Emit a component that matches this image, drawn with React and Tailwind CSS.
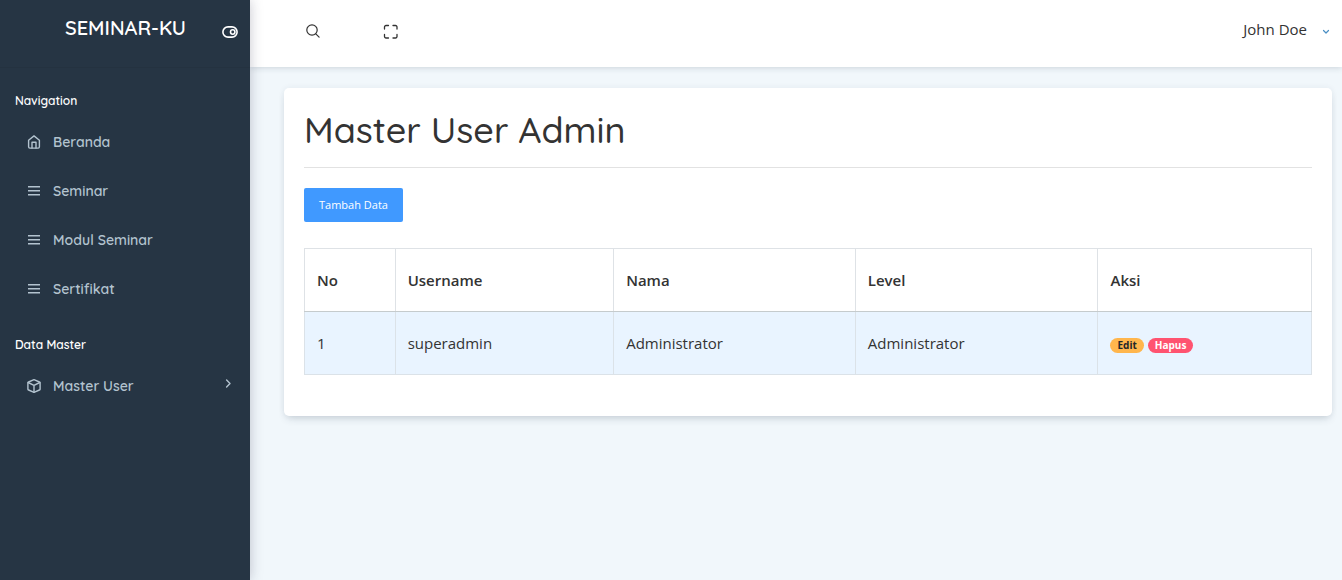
import React from "react";

const heading = "font-['Quicksand','Lato',sans-serif]";

function Icon({ children, className = "", ...rest }) {
  return (
    <svg
      viewBox="0 0 16 16"
      fill="none"
      stroke="currentColor"
      strokeWidth="1.4"
      strokeLinecap="round"
      strokeLinejoin="round"
      aria-hidden="true"
      className={"size-4 shrink-0 " + className}
      {...rest}
    >
      {children}
    </svg>
  );
}

const HomeIcon = () => (
  <Icon strokeWidth="1.4">
    <path d="M2.6 6.2 8 1.9l5.4 4.3v6.6a1.3 1.3 0 0 1-1.3 1.3H3.9a1.3 1.3 0 0 1-1.3-1.3z" />
    <path d="M6 14V8.2h4V14" />
  </Icon>
);

const ListIcon = () => (
  <Icon strokeLinecap="butt" strokeWidth="1.5">
    <path d="M2 3.8h12M2 7.8h12M2 11.8h12" />
  </Icon>
);

const BoxIcon = () => (
  <Icon strokeWidth="1.4">
    <path d="M8 1.6 13.4 4a1 1 0 0 1 .7.9v6.2a1 1 0 0 1-.7.9L8 14.4 2.6 12a1 1 0 0 1-.7-.9V4.9a1 1 0 0 1 .7-.9z" />
    <path d="M2.2 4.5 8 7.4l5.8-2.9M8 7.4v6.8" />
  </Icon>
);

function NavGroup({ title, items }) {
  return (
    <section>
      <h2 className={"px-[15px] py-2 text-[12px] leading-4 font-semibold text-white " + heading}>{title}</h2>
      <ul>
        {items.map(({ label, icon: I, more }) => (
          <li key={label}>
            <a href="#" className="flex h-[49px] items-center pr-[14px] pl-[26px] text-[#b3c3cf]">
              <I />
              <span className={"ml-[11px] grow text-[14px] leading-5 font-semibold " + heading}>{label}</span>
              {more && (
                <Icon className="mb-1">
                  <path d="m6.6 4 3.4 3.5-3.4 3.5" />
                </Icon>
              )}
            </a>
          </li>
        ))}
      </ul>
    </section>
  );
}

const columns = [
  ["No", "w-[9%]"],
  ["Username", "w-[21.7%]"],
  ["Nama", "w-[24%]"],
  ["Level", "w-[24.1%]"],
  ["Aksi", "w-[21.2%]"],
];

const users = [{ no: 1, username: "superadmin", nama: "Administrator", level: "Administrator" }];

export default function App() {
  return (
    <div className="flex min-h-screen bg-[#f1f7fb] font-['Open_Sans',sans-serif] text-[#333]">
      <aside className="z-10 w-[250px] shrink-0 bg-[#263544] shadow-[0_0_12px_rgba(40,40,70,0.26)]">
        <div className="flex h-[68px] items-start justify-end border-b border-[#243240] pr-3">
          <a href="#" className={"mt-3 mr-9 text-[20px] leading-8 font-semibold text-white " + heading}>
            SEMINAR-KU
          </a>
          <button type="button" aria-label="Toggle sidebar" className="mt-6 text-white">
            <Icon strokeWidth="1.6">
              <rect x=".9" y="2.9" width="14.2" height="10.2" rx="5.1" />
              <circle cx="10.7" cy="8" r="2.2" />
            </Icon>
          </button>
        </div>
        <nav className="flex flex-col gap-4 pt-[17px]">
          <NavGroup
            title="Navigation"
            items={[
              { label: "Beranda", icon: HomeIcon },
              { label: "Seminar", icon: ListIcon },
              { label: "Modul Seminar", icon: ListIcon },
              { label: "Sertifikat", icon: ListIcon },
            ]}
          />
          <NavGroup title="Data Master" items={[{ label: "Master User", icon: BoxIcon, more: true }]} />
        </nav>
      </aside>

      <div className="min-w-0 grow">
        <header className="flex h-[67px] items-start bg-white pr-2 pl-[55px] shadow-[0_1px_6px_rgba(40,60,80,0.18)]">
          <button type="button" aria-label="Search" className="mt-[23px]">
            <Icon strokeWidth="1.2">
              <circle cx="7" cy="7" r="5.2" />
              <path d="m10.8 10.8 3.3 3.3" />
            </Icon>
          </button>
          <button type="button" aria-label="Full screen" className="mt-6 ml-[62px]">
            <Icon strokeWidth="1.3">
              <path d="M1.5 5V3A1.5 1.5 0 0 1 3 1.5h2.5M10 1.5h2.5A1.5 1.5 0 0 1 14 3v2M14 10.5v2a1.5 1.5 0 0 1-1.5 1.5H10M5.5 14H3a1.5 1.5 0 0 1-1.5-1.5v-2" />
            </Icon>
          </button>
          <button
            type="button"
            className="mt-[17px] ml-auto flex items-center gap-[11px] text-[15px] leading-6"
          >
            <span>John Doe</span>
            <Icon className="mt-[5px] text-[#4a8fc4]" strokeWidth="1.2">
              <path d="m5.5 6.5 2.5 2.5 2.5-2.5" />
            </Icon>
          </button>
        </header>

        <main className="pt-[21px] pr-[10px] pb-8 pl-[34px]">
          <section className="rounded-[5px] bg-white px-5 pt-5 pb-[41px] shadow-[0_5px_8px_-3px_rgba(40,60,80,0.2),0_0_6px_rgba(40,60,80,0.07)]">
            <h1 className={"border-b border-[#e2e2e2] pb-[15px] text-[36px] leading-11 font-medium " + heading}>
              Master User Admin
            </h1>
            <button
              type="button"
              className="mt-5 h-[34px] rounded-[2px] bg-[#4099ff] px-[15px] text-[11px] leading-4 text-white"
            >
              Tambah Data
            </button>
            <table className="mt-[26px] w-full table-fixed border-collapse text-left text-[15px] leading-6">
              <thead>
                <tr className="h-[63px]">
                  {columns.map(([name, width]) => (
                    <th key={name} className={"border border-[#dee2e6] border-b-[#c5cbcd] px-3 font-semibold " + width}>
                      {name}
                    </th>
                  ))}
                </tr>
              </thead>
              <tbody>
                {users.map((u) => (
                  <tr key={u.no} className="h-[63px] bg-[#e9f4ff] *:border *:border-[#dbe2e8] *:px-3">
                    <td>{u.no}</td>
                    <td>{u.username}</td>
                    <td>{u.nama}</td>
                    <td>{u.level}</td>
                    <td>
                      <div className="flex gap-1 pt-1 text-[10px] leading-[15px] font-bold">
                        <a href="#" className="rounded-full bg-[#ffb64d] px-[7px] text-[#212529]">
                          Edit
                        </a>
                        <a href="#" className="rounded-full bg-[#ff5370] px-[7px] text-white">
                          Hapus
                        </a>
                      </div>
                    </td>
                  </tr>
                ))}
              </tbody>
            </table>
          </section>
        </main>
      </div>
    </div>
  );
}
